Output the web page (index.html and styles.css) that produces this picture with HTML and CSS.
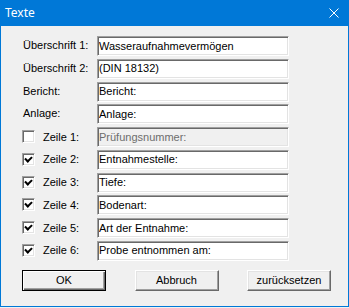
FILE: index.html
```html
<!DOCTYPE html>
<html lang="de">
<head>
    <meta charset="UTF-8">
    <meta name="viewport" content="width=device-width, initial-scale=1.0">
    <title>Texte</title>
    <link rel="stylesheet" href="styles.css">
</head>
<body>
    <div class="dialog">
        <div class="title-bar">
            <span class="title">Texte</span>
            <svg class="close" width="10" height="10" viewBox="0 0 10 10">
                <path d="M0.5 0.5 L9.5 9.5 M9.5 0.5 L0.5 9.5" stroke="#fff" stroke-width="1" fill="none"/>
            </svg>
        </div>

        <div class="dialog-body">
            <div class="fields">
                <label class="field-label">Überschrift 1:</label>
                <input class="text-field" type="text" value="Wasseraufnahmevermögen">

                <label class="field-label">Überschrift 2:</label>
                <input class="text-field" type="text" value="(DIN 18132)">

                <label class="field-label">Bericht:</label>
                <input class="text-field" type="text" value="Bericht:">

                <label class="field-label">Anlage:</label>
                <input class="text-field" type="text" value="Anlage:">

                <!-- Zeilen with checkboxes -->
                <label class="check-label"><span class="check-box"></span>Zeile 1:</label>
                <input class="text-field" type="text" value="Prüfungsnummer:" disabled>

                <label class="check-label"><span class="check-box checked"></span>Zeile 2:</label>
                <input class="text-field" type="text" value="Entnahmestelle:">

                <label class="check-label"><span class="check-box checked"></span>Zeile 3:</label>
                <input class="text-field" type="text" value="Tiefe:">

                <label class="check-label"><span class="check-box checked"></span>Zeile 4:</label>
                <input class="text-field" type="text" value="Bodenart:">

                <label class="check-label"><span class="check-box checked"></span>Zeile 5:</label>
                <input class="text-field" type="text" value="Art der Entnahme:">

                <label class="check-label"><span class="check-box checked"></span>Zeile 6:</label>
                <input class="text-field" type="text" value="Probe entnommen am:">
            </div>

            <div class="button-row">
                <button class="btn btn-default">OK</button>
                <button class="btn">Abbruch</button>
                <button class="btn">zurücksetzen</button>
            </div>
        </div>
    </div>
</body>
</html>
```

FILE: styles.css
```css
html, body {
    margin: 0;
    padding: 0;
    background-color: #f0f0f0;
}

body {
    font-family: "Liberation Sans", Arial, sans-serif;
    font-size: 11px;
    color: #000;
}

.dialog {
    width: 349px;
    height: 307px;
    box-sizing: border-box;
    border: 1px solid #0078d7;
    border-top: none;
    background-color: #f0f0f0;
}

.title-bar {
    height: 26px;
    margin: 0 -1px;
    background-color: #0078d7;
    display: flex;
    align-items: center;
    justify-content: space-between;
    padding: 0 10px 0 5px;
}

.title {
    font-family: "Noto Sans", "Open Sans", sans-serif;
    font-size: 12px;
    color: #fff;
    margin-top: -1px;
}

.close {
    margin-top: -1px;
}

.dialog-body {
    padding: 10px 0 0 21px;
}

.fields {
    display: grid;
    grid-template-columns: 75px 192px;
    grid-auto-rows: 20px;
    row-gap: 2.75px;
}

.field-label {
    display: flex;
    align-items: center;
    padding-left: 1px;
    padding-bottom: 2px;
}

.check-label {
    display: flex;
    align-items: center;
    padding-bottom: 1px;
}

.check-box {
    width: 13px;
    height: 13px;
    box-sizing: border-box;
    margin-right: 8px;
    background-color: #fff;
    border-top: 1px solid #a0a0a0;
    border-left: 1px solid #a0a0a0;
    border-right: 1px solid #fff;
    border-bottom: 1px solid #fff;
    box-shadow: inset 1px 1px 0 #696969, inset -1px -1px 0 #e3e3e3;
    display: flex;
    align-items: center;
    justify-content: center;
}

.check-box.checked::after {
    content: "";
    width: 5px;
    height: 3px;
    border-left: 2px solid #000;
    border-bottom: 2px solid #000;
    transform: rotate(-45deg);
    margin-top: -2px;
}

.text-field {
    box-sizing: border-box;
    width: 192px;
    height: 20px;
    margin: 0;
    padding: 0 0 1px 1px;
    font-family: inherit;
    font-size: 11px;
    color: #000;
    background-color: #fff;
    border-top: 1px solid #a0a0a0;
    border-left: 1px solid #a0a0a0;
    border-right: 1px solid #fff;
    border-bottom: 1px solid #fff;
    box-shadow: inset 1px 1px 0 #696969, inset -1px -1px 0 #e3e3e3;
    outline: none;
}

.text-field:disabled {
    background-color: #f0f0f0;
    color: #6d6d6d;
}

.button-row {
    display: flex;
    justify-content: space-between;
    width: 309px;
    margin-top: 9px;
}

.btn {
    width: 84px;
    height: 21px;
    box-sizing: border-box;
    margin: 0;
    padding: 0 0 1px 0;
    font-family: inherit;
    font-size: 11px;
    color: #000;
    background-color: #f0f0f0;
    border-top: 1px solid #fff;
    border-left: 1px solid #fff;
    border-right: 1px solid #696969;
    border-bottom: 1px solid #696969;
    box-shadow: inset -1px -1px 0 #a0a0a0, inset 1px 1px 0 #e3e3e3;
}

.btn-default {
    border: 1px solid #000;
    box-shadow: inset 1px 1px 0 #fff, inset -1px -1px 0 #696969, inset -2px -2px 0 #a0a0a0;
}
```
